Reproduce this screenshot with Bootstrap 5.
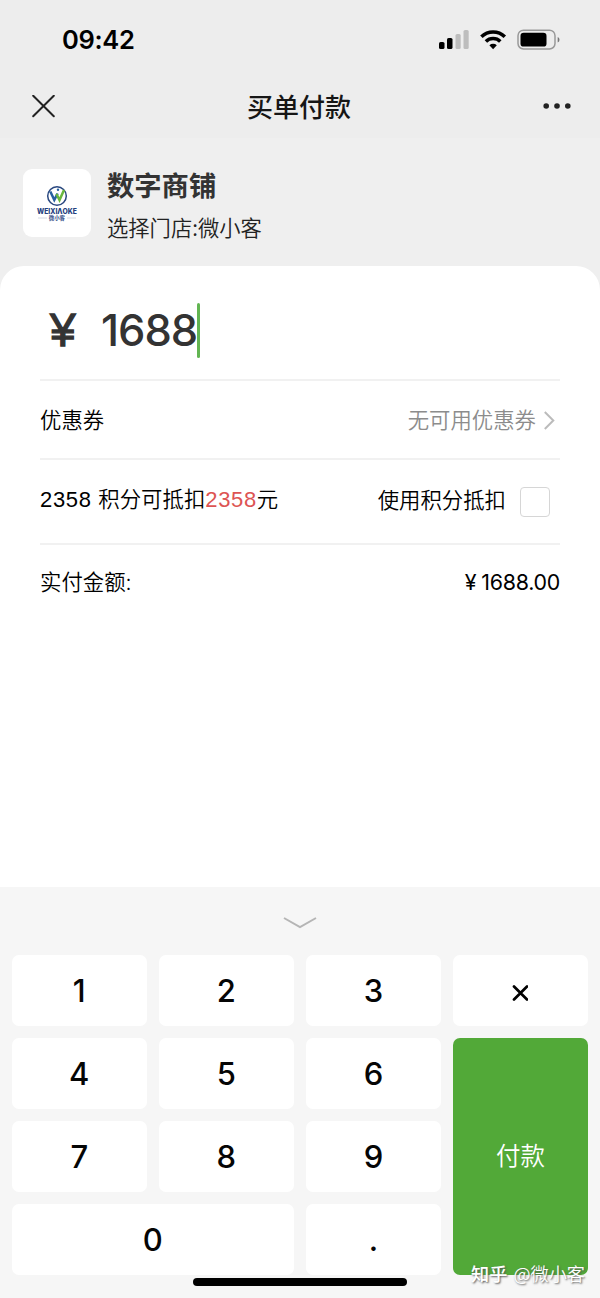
<!DOCTYPE html>
<html lang="zh-CN">
<head>
<meta charset="utf-8">
<meta name="viewport" content="width=device-width, initial-scale=1">
<title>买单付款</title>
<link href="https://cdn.jsdelivr.net/npm/bootstrap@5.3.0/dist/css/bootstrap.min.css" rel="stylesheet">
<style>
body{font-family:Inter,"Noto Sans CJK SC",sans-serif;font-size:21.4px;font-weight:350;color:#000;background:#efefef;line-height:1.4}
.screen{width:600px;height:1298px;overflow:hidden}
.top-area{height:138px;background:#ededed}
.status{height:74px;padding:6px 40px 0 62px}
.clock{font-size:25.5px;font-weight:600;letter-spacing:-.3px}
.title-row{height:64px;padding:0 29px 0 32px}
.page-title{font-size:26px;font-weight:500;color:#161616;padding-top:4px}
.shop{height:128px;padding:0 23px}
.logo-box{width:68px;height:68px;border-radius:9px;margin-top:1px}
.shop-name{font-size:27.3px;font-weight:700;color:#333;line-height:40px}
.shop-text{padding-top:5px}
.shop-branch{font-size:21.3px;color:#222;line-height:32px;font-family:"Noto Sans CJK SC",sans-serif}
.sheet{border-radius:24px 24px 0 0;height:621px;padding:0 40px}
.line{border-bottom:2px solid #f1f1f1}
.amount{height:115px;color:#333;padding:15px 0 0 10px}
.yen{font-size:46px;font-weight:400;font-family:"Liberation Sans",sans-serif;width:51px;-webkit-text-stroke:1.3px #333}
.figure{font-size:43.5px;font-weight:500;letter-spacing:-1px;padding-top:1px}
.caret{width:3px;height:55px;background:#62b552;border-radius:2px}
.coupon{height:79px}
.coupon>span{padding-top:2px}
.points{height:85px;padding-bottom:1px}
.arial{font-family:"Liberation Sans","Noto Sans CJK SC",sans-serif;padding-bottom:2px}
.num{font-size:22px;letter-spacing:.65px}
.hint{color:#8c8c8c}
.red{color:#dd5453}
.final{height:76px}
.total{letter-spacing:-.25px;font-weight:400}
.total .sign{margin-right:5px}
.tick{width:30px;height:30px;border:1.5px solid #d6d6d6;border-radius:4px;margin:1px 10px 0 14px}
.pad{height:411px;background:#f6f6f6;padding:0 12px}
.fold{height:68px;padding-top:3px}
.keys{display:grid;grid-template-columns:repeat(4,134.5px);grid-template-rows:repeat(4,70.6px);gap:12.5px 12.6px}
.key{background:#fff;border:0;border-radius:7px;font-size:31px;font-weight:500;color:#050505;padding:0}
.wide{grid-column:span 2}
.pay{grid-column:4;grid-row:2/5;background:#52a938;color:#fff;font-size:24.5px;font-weight:350}
.home-bar{width:214px;height:8px;left:193px;top:1278px;border-radius:4px;background:#000}
.credit{left:471px;top:1259px;font:350 18.2px/28px "Noto Sans CJK SC",sans-serif;color:#fff;text-shadow:1px 1px 2px #555}
.credit b{font-weight:500;margin-right:2px}
</style>
</head>
<body>
<main class="screen position-relative">
  <header class="top-area">
    <div class="status d-flex align-items-center justify-content-between">
      <span class="clock">09:42</span>
      <svg width="122" height="24" viewBox="0 0 122 24">
        <rect x="1" y="14" width="5.5" height="7" rx="1.6"/><rect x="9" y="10" width="5.5" height="11" rx="1.6"/>
        <g fill="#bdbdbd"><rect x="17.5" y="6" width="5.2" height="15" rx="1.6"/><rect x="25.5" y="2" width="5.2" height="19" rx="1.6"/></g>
        <g fill="none" stroke="#000" stroke-width="3.5"><path d="M43.400 8.700a16.600 16.600 0 0 1 23.400 0"/><path d="M47.900 13.400a10.200 10.200 0 0 1 14.400 0"/></g>
        <path d="M51.400 17.300a5.400 5.400 0 0 1 7.400 0L55.100 21.300z"/>
        <rect x="80" y="2.200" width="37" height="18.800" rx="5.500" fill="none" stroke="#999" stroke-width="1.500"/>
        <rect x="82.500" y="4.800" width="26" height="13.800" rx="3.200"/><path d="M119.700 9q1.800.5 1.800 2.700t-1.800 2.700z" fill="#777"/>
      </svg>
    </div>
    <div class="title-row d-flex align-items-center justify-content-between">
      <svg width="23" height="23" viewBox="0 0 23 23" stroke="#222" stroke-width="2" stroke-linecap="round"><path d="M1.200 .7l20.600 20.600M21.800 .7L1.200 21.300"/></svg>
      <span class="page-title">买单付款</span>
      <svg width="28" height="8" fill="#222"><circle cx="3.200" cy="4" r="2.800"/><circle cx="14" cy="4" r="2.800"/><circle cx="24.800" cy="4" r="2.800"/></svg>
    </div>
  </header>
  <section class="shop d-flex align-items-center">
    <div class="logo-box bg-white flex-shrink-0">
      <svg class="d-block" width="68" height="68" viewBox="0 0 68 68">
        <circle cx="34" cy="27" r="9.300" fill="none" stroke="#29477f" stroke-width="1.500"/>
        <path d="M27.300 22.500l4 8.500 3.300-6.500" fill="none" stroke="#2860a0" stroke-width="2.500"/>
        <path d="M33.500 25l3 6 4.500-10" fill="none" stroke="#69b83e" stroke-width="2.500"/>
        <circle cx="35" cy="20.800" r="1.200" fill="#2860a0"/>
        <text x="14" y="44.500" font-family="Inter" font-size="7" font-weight="800" fill="#24407e" textLength="40" lengthAdjust="spacingAndGlyphs">WEIXIΛOKE</text>
        <text x="25.800" y="51.300" font-family="Noto Sans CJK SC" font-size="5.400" font-weight="700" fill="#334d87">微小客</text>
        <path d="M15 49h9M44 49h9" stroke="#c9cfda" stroke-width=".8"/>
      </svg>
    </div>
    <div class="shop-text ms-3">
      <div class="shop-name">数字商铺</div>
      <div class="shop-branch mt-1">选择门店:微小客</div>
    </div>
  </section>
  <section class="sheet bg-white">
    <div class="amount line d-flex align-items-center">
      <span class="yen">¥</span><span class="figure">1688</span><i class="caret"></i>
    </div>
    <div class="coupon line d-flex align-items-center justify-content-between">
      <span>优惠券</span>
      <span class="hint d-flex align-items-center">无可用优惠券
        <svg class="ms-2 me-1" width="12" height="20" fill="none" stroke="#bbb" stroke-width="2"><path d="M.8 1l8.500 8.500-8.500 8.500"/></svg>
      </span>
    </div>
    <div class="points line d-flex align-items-center justify-content-between">
      <span class="arial"><span class="num">2358 </span>积分可抵扣<span class="num red">2358</span>元</span>
      <span class="d-flex align-items-center">使用积分抵扣<i class="tick"></i></span>
    </div>
    <div class="final d-flex align-items-center justify-content-between">
      <span>实付金额:</span><span class="total"><span class="sign">¥</span>1688.00</span>
    </div>
  </section>
  <section class="pad">
    <div class="fold d-flex align-items-center justify-content-center">
      <svg width="34" height="14" fill="none" stroke="#b5b5b5" stroke-width="2"><path d="M1 2l16 9 16-9"/></svg>
    </div>
    <div class="keys">
      <button class="key">1</button><button class="key">2</button><button class="key">3</button>
      <button class="key" aria-label="删除"><svg class="me-1" width="18" height="18" viewBox="-1 0 18 18" stroke="#000" stroke-width="2.700" stroke-linecap="round"><path d="M3 2.500l13 13M16 2.500l-13 13"/></svg></button>
      <button class="key">4</button><button class="key">5</button><button class="key">6</button>
      <button class="key pay">付款</button>
      <button class="key">7</button><button class="key">8</button><button class="key">9</button>
      <button class="key wide">0</button><button class="key">.</button>
    </div>
  </section>
  <div class="home-bar position-absolute"></div>
  <div class="credit position-absolute text-nowrap"><b>知乎</b> @微小客</div>
</main>
<script src="https://cdn.jsdelivr.net/npm/bootstrap@5.3.0/dist/js/bootstrap.bundle.min.js"></script>
</body>
</html>
